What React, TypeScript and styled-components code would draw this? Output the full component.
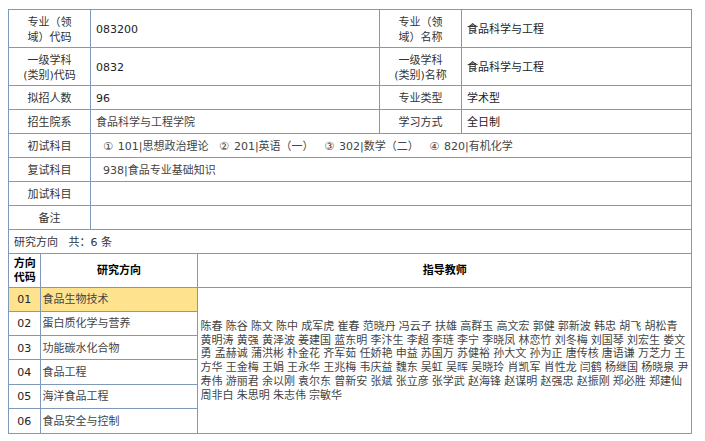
import React from "react";
import styled, { createGlobalStyle } from "styled-components";

const Global = createGlobalStyle`
  html, body { margin: 0; padding: 0; background: #fff; }
  body { padding: 9px 0 0 8px; font: 11px/16px "DejaVu Sans", "Noto Sans CJK SC", sans-serif; color: #333; }
`;
const line = "#7f99b8";
const Sheet = styled.table`
  width: 684px; border-collapse: collapse; table-layout: fixed; border: 1px solid ${line};
`;
const Row = styled.tr<{ $h: number }>`
  height: ${(p) => p.$h}px;
`;
const Label = styled.td`
  border: 1px solid ${line}; text-align: center; padding: 2px 0 0; color: #333;
`;
const TwoLineLabel = styled(Label)`
  padding-top: 3px; line-height: 15px;
`;
const Value = styled.td<{ $dark?: boolean }>`
  border: 1px solid ${line}; padding: 2px 5px 0; color: ${(p) => (p.$dark ? "#222" : "#444")};
`;
const Subjects = styled(Value)`
  padding-left: 12px; word-spacing: 1.5px;
`;
const Subject = styled.span`
  margin-right: 10.5px;
`;
const Summary = styled.td`
  border: 1px solid ${line}; padding: 2px 5px 0;
`;
const Holder = styled.td`
  border: 1px solid ${line}; padding: 0;
`;
const Inner = styled.table`
  width: 100%; border-collapse: collapse; table-layout: fixed; margin: 0; border-style: hidden;
`;
const Head = styled.th`
  border: 1px solid ${line}; color: #000; font-weight: bold; text-align: center; padding: 2px 0 0 1px; line-height: 14px;
`;
const Dir = styled.tr<{ $on?: boolean }>`
  height: 24.3px; background: ${(p) => (p.$on ? "#ffe28e" : "#fff")};
`;
const Code = styled.td`
  border: 1px solid ${line}; text-align: center; color: #222; padding: 2px 0 0;
`;
const Name = styled.td`
  border: 1px solid ${line}; padding: 2px 2px 0; color: #444;
`;
const Tutors = styled.td`
  border: 1px solid ${line}; padding: 2px 2px 0 3px; color: #444; line-height: 13.8px; background: #fff; word-break: break-all; word-spacing: -0.3px;
`;

const dirs = ["食品生物技术", "蛋白质化学与营养", "功能碳水化合物", "食品工程", "海洋食品工程", "食品安全与控制"];
const tutors = "陈春 陈谷 陈文 陈中 成军虎 崔春 范晓丹 冯云子 扶雄 高群玉 高文宏 郭健 郭新波 韩忠 胡飞 胡松青 黄明涛 黄强 黄泽波 姜建国 蓝东明 李汴生 李超 李琏 李宁 李晓凤 林恋竹 刘冬梅 刘国琴 刘宏生 娄文勇 孟赫诚 蒲洪彬 朴金花 齐军茹 任娇艳 申益 苏国万 苏健裕 孙大文 孙为正 唐传核 唐语谦 万芝力 王方华 王金梅 王娟 王永华 王兆梅 韦庆益 魏东 吴虹 吴晖 吴晓玲 肖凯军 肖性龙 闫鹤 杨继国 杨晓泉 尹寿伟 游丽君 余以刚 袁尔东 曾新安 张斌 张立彦 张学武 赵海锋 赵谋明 赵强忠 赵振刚 郑必胜 郑建仙 周非白 朱思明 朱志伟 宗敏华";

export default function App() {
  return (
    <>
      <Global />
      <Sheet>
        <colgroup>
          <col style={{ width: 82 }} />
          <col style={{ width: 289 }} />
          <col style={{ width: 82 }} />
          <col />
        </colgroup>
        <tbody>
          <Row $h={38}>
            <TwoLineLabel>专业（领<br />域）代码</TwoLineLabel>
            <Value $dark>083200</Value>
            <TwoLineLabel>专业（领<br />域）名称</TwoLineLabel>
            <Value $dark>食品科学与工程</Value>
          </Row>
          <Row $h={38}>
            <TwoLineLabel>一级学科<br />(类别)代码</TwoLineLabel>
            <Value $dark>0832</Value>
            <TwoLineLabel>一级学科<br />(类别)名称</TwoLineLabel>
            <Value $dark>食品科学与工程</Value>
          </Row>
          <Row $h={24}>
            <Label>拟招人数</Label>
            <Value $dark>96</Value>
            <Label>专业类型</Label>
            <Value $dark>学术型</Value>
          </Row>
          <Row $h={24}>
            <Label>招生院系</Label>
            <Value>食品科学与工程学院</Value>
            <Label>学习方式</Label>
            <Value $dark>全日制</Value>
          </Row>
          <Row $h={24}>
            <Label>初试科目</Label>
            <Subjects colSpan={3}>
              <Subject>① 101|思想政治理论</Subject>
              <Subject>② 201|英语（一）</Subject>
              <Subject>③ 302|数学（二）</Subject>
              <Subject>④ 820|有机化学</Subject>
            </Subjects>
          </Row>
          <Row $h={24}>
            <Label>复试科目</Label>
            <Subjects colSpan={3}>938|食品专业基础知识</Subjects>
          </Row>
          <Row $h={24}>
            <Label>加试科目</Label>
            <Value colSpan={3} />
          </Row>
          <Row $h={24}>
            <Label>备注</Label>
            <Value colSpan={3} />
          </Row>
          <Row $h={24}>
            <Summary colSpan={4}>研究方向&nbsp;&nbsp; 共：6 条</Summary>
          </Row>
          <tr>
            <Holder colSpan={4}>
              <Inner>
                <colgroup>
                  <col style={{ width: 31 }} />
                  <col style={{ width: 157 }} />
                  <col />
                </colgroup>
                <tbody>
                  <Row $h={33}>
                    <Head>方向<br />代码</Head>
                    <Head>研究方向</Head>
                    <Head>指导教师</Head>
                  </Row>
                  {dirs.map((d, i) => (
                    <Dir key={d} $on={i === 0}>
                      <Code>0{i + 1}</Code>
                      <Name>{d}</Name>
                      {i === 0 && <Tutors rowSpan={6}>{tutors}</Tutors>}
                    </Dir>
                  ))}
                </tbody>
              </Inner>
            </Holder>
          </tr>
        </tbody>
      </Sheet>
    </>
  );
}
